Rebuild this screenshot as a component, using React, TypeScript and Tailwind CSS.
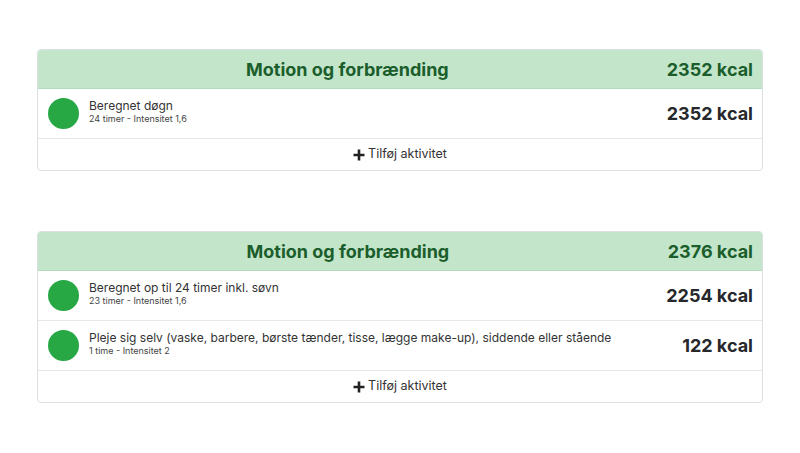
import React from "react";

type Activity = {
  name: string;
  detail: string;
  kcal: number;
};

const cards: { total: number; items: Activity[] }[] = [
  {
    total: 2352,
    items: [{ name: "Beregnet døgn", detail: "24 timer - Intensitet 1,6", kcal: 2352 }],
  },
  {
    total: 2376,
    items: [
      { name: "Beregnet op til 24 timer inkl. søvn", detail: "23 timer - Intensitet 1,6", kcal: 2254 },
      {
        name: "Pleje sig selv (vaske, barbere, børste tænder, tisse, lægge make-up), siddende eller stående",
        detail: "1 time - Intensitet 2",
        kcal: 122,
      },
    ],
  },
];

function ActivityCard({ total, items }: { total: number; items: Activity[] }) {
  return (
    <div className="border border-[#dcdfe3] rounded-[4px] overflow-hidden bg-white">
      <div className="flex items-center h-[39px] bg-[#c3e6cb] border-b border-[#b4dbbd] pl-[10px] pr-[9px]">
        <div className="flex-1 text-center text-[18px] font-bold text-[#1b5e2b] mr-[20px]">Motion og forbrænding</div>
        <div className="text-[18px] font-bold text-[#1b5e2b]">{total} kcal</div>
      </div>
      {items.map((a, i) => (
        <div key={i} className="flex items-center h-[50px] border-b border-[#e6e8eb] pl-[10px] pr-[9px]">
          <div className="w-[31px] h-[31px] rounded-full bg-[#28a745] shrink-0" />
          <div className="flex-1 ml-[10px] mb-[6px]">
            <div className="text-[12px] text-[#333] leading-[15px]">{a.name}</div>
            <div className="text-[9px] text-[#444] leading-[11px]">{a.detail}</div>
          </div>
          <div className="text-[18px] font-bold text-[#26282b]">{a.kcal} kcal</div>
        </div>
      ))}
      <div className="flex items-center justify-center h-[31px] text-[12.5px] text-[#333]">
        <svg width="12" height="12" viewBox="0 0 12 12" className="mr-[3px]">
          <path d="M6 0.5v11M0.5 6h11" stroke="#222" strokeWidth="2.6" />
        </svg>
        Tilføj aktivitet
      </div>
    </div>
  );
}

export default function App() {
  return (
    <div className="w-[800px] h-[453px] bg-white px-[37px] pt-[49px] flex flex-col gap-[60px]" style={{ fontFamily: "Inter, 'Noto Sans', sans-serif" }}>
      {cards.map((c, i) => (
        <ActivityCard key={i} total={c.total} items={c.items} />
      ))}
    </div>
  );
}
